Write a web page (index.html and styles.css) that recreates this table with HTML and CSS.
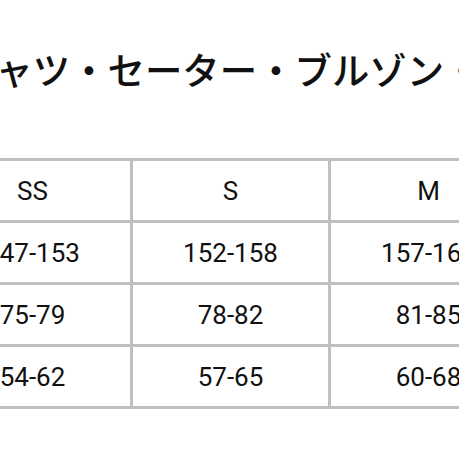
FILE: index.html
```html
<!DOCTYPE html>
<html lang="ja">
<head>
<meta charset="utf-8">
<link rel="stylesheet" href="styles.css">
</head>
<body>
<div class="page">
  <h1 class="title">シャツ・セーター・ブルゾン・コート</h1>
  <table class="size-table">
    <tr><td>SS</td><td>S</td><td>M</td></tr>
    <tr><td>147-153</td><td>152-158</td><td>157-163</td></tr>
    <tr><td>75-79</td><td>78-82</td><td>81-85</td></tr>
    <tr><td>54-62</td><td>57-65</td><td>60-68</td></tr>
  </table>
</div>
</body>
</html>
```
FILE: styles.css
```css
html, body {
  margin: 0;
  padding: 0;
  background: #fff;
  overflow: hidden;
  width: 459px;
  height: 459px;
}
.page {
  width: 459px;
  height: 459px;
  overflow: hidden;
}
.title {
  margin: 0;
  padding-top: 47px;
  margin-left: -42px;
  width: 700px;
  white-space: nowrap;
  font-family: "Noto Sans CJK JP", sans-serif;
  font-weight: 500;
  font-size: 37.4px;
  line-height: 44px;
  color: #111;
}
.size-table {
  margin-top: 67px;
  margin-left: -68px;
  width: 597px;
  table-layout: fixed;
  border-collapse: collapse;
  font-family: Roboto, "Noto Sans", sans-serif;
  font-size: 26px;
  color: #111;
}
.size-table td {
  border: 3px solid #bfbfbf;
  height: 59px;
  padding: 0;
  text-align: center;
  vertical-align: middle;
}
```
